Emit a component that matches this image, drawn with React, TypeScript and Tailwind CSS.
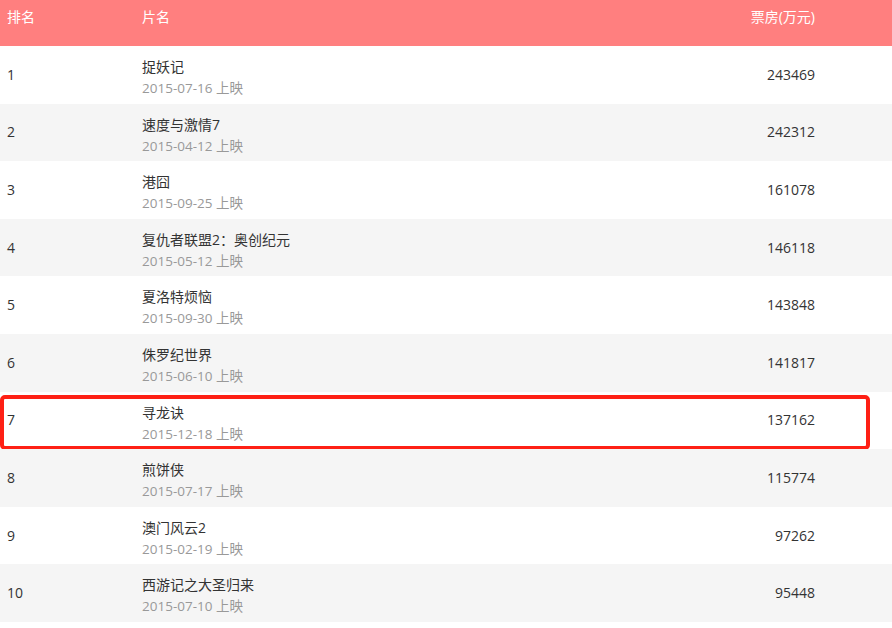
const movies = [
  { rank: 1, name: '捉妖记', date: '2015-07-16', box: '243469' },
  { rank: 2, name: '速度与激情7', date: '2015-04-12', box: '242312' },
  { rank: 3, name: '港囧', date: '2015-09-25', box: '161078' },
  { rank: 4, name: '复仇者联盟2：奥创纪元', date: '2015-05-12', box: '146118' },
  { rank: 5, name: '夏洛特烦恼', date: '2015-09-30', box: '143848' },
  { rank: 6, name: '侏罗纪世界', date: '2015-06-10', box: '141817' },
  { rank: 7, name: '寻龙诀', date: '2015-12-18', box: '137162' },
  { rank: 8, name: '煎饼侠', date: '2015-07-17', box: '115774' },
  { rank: 9, name: '澳门风云2', date: '2015-02-19', box: '97262' },
  { rank: 10, name: '西游记之大圣归来', date: '2015-07-10', box: '95448' },
];

export default function App() {
  return (
    <div
      className="w-[892px] h-[628px] bg-white overflow-hidden text-[14px]"
      style={{ fontFamily: '"Open Sans", "Noto Sans CJK SC", sans-serif' }}
    >
      {/* Header */}
      <div className="h-[46px] bg-[#ff7f7f] text-white flex items-start pt-[7px] leading-[20px]">
        <div className="w-[142px] pl-[7px]">排名</div>
        <div className="flex-1">片名</div>
        <div className="w-[200px] text-right pr-[77px]">票房(万元)</div>
      </div>

      {/* Rows */}
      {movies.map((m, i) => (
        <div
          key={m.rank}
          className={`relative h-[57.6px] flex items-center text-[#333] ${i % 2 === 1 ? 'bg-[#f5f5f5]' : 'bg-white'}`}
        >
          <div className="w-[142px] pl-[7px] leading-[20px]">{m.rank}</div>
          <div className="flex-1 self-start pt-[11px]">
            <div className="leading-[20px] text-[#333]">{m.name}</div>
            <div className="leading-[20px] mt-[1px] text-[13.5px] text-[#999]">{m.date} 上映</div>
          </div>
          <div className="w-[200px] text-right pr-[77px] leading-[20px]">{m.box}</div>

          {m.rank === 7 && (
            <div className="absolute left-0 top-[3px] bottom-[-1px] w-[870px] border-[4px] border-[#fe2015] rounded-[5px]" />
          )}
        </div>
      ))}
    </div>
  );
}
